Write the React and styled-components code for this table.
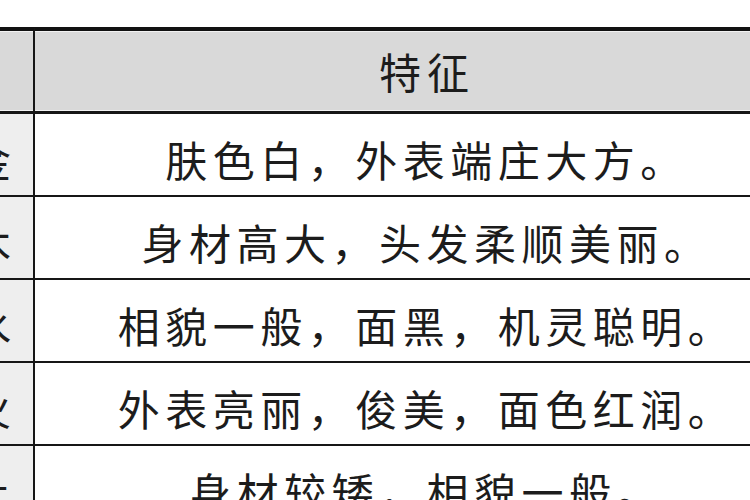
import React from "react";
import styled, { createGlobalStyle } from "styled-components";

const GlobalStyle = createGlobalStyle`
  html, body {
    margin: 0;
    padding: 0;
    background: #ffffff;
    overflow: hidden;
  }
`;

const Page = styled.div`
  width: 750px;
  height: 500px;
  overflow: hidden;
  padding-top: 27px;
  box-sizing: border-box;
  background: #ffffff;
  font-family: "Noto Sans CJK SC", "Noto Sans", sans-serif;
`;

const Table = styled.div`
  display: grid;
  grid-template-columns: 88px 772px;
  margin-left: -53px;
  width: 862px;
`;

const Cell = styled.div`
  display: flex;
  align-items: center;
  justify-content: center;
  box-sizing: content-box;
  color: #1c1c1c;
  font-size: 42px;
  line-height: 1;
  white-space: nowrap;
  overflow: hidden;
  border-bottom: ${(p) => (p.$head ? "3px" : "2px")} solid #161616;
  border-top: ${(p) => (p.$head ? "4px solid #111" : "none")};
  border-right: ${(p) => (p.$key ? "2px solid #161616" : "none")};
  height: ${(p) => (p.$head ? "80px" : "73px")};
  padding-top: ${(p) => (p.$head ? "0" : "8px")};
  letter-spacing: ${(p) => (p.$key ? "0" : p.$head ? "6px" : "5.5px")};
  text-indent: ${(p) => (p.$key ? "0" : p.$head ? "12px" : "11px")};
  background: ${(p) => (p.$head ? "#d9d9d9" : p.$key ? "#eeeeee" : "#ffffff")};
  box-shadow: ${(p) =>
    p.$head ? "inset 0 1px 0 #f2f2f2, inset 0 -1px 0 #f2f2f2" : "none"};
`;

const rows = [
  ["金", "肤色白，外表端庄大方。"],
  ["木", "身材高大，头发柔顺美丽。"],
  ["水", "相貌一般，面黑，机灵聪明。"],
  ["火", "外表亮丽，俊美，面色红润。"],
  ["土", "身材较矮，相貌一般。"],
];

export default function App() {
  return (
    <>
      <GlobalStyle />
      <Page>
        <Table>
          <Cell $head $key></Cell>
          <Cell $head>特征</Cell>
          {rows.map(([k, v]) => (
            <React.Fragment key={k}>
              <Cell $key>{k}</Cell>
              <Cell>{v}</Cell>
            </React.Fragment>
          ))}
        </Table>
      </Page>
    </>
  );
}
